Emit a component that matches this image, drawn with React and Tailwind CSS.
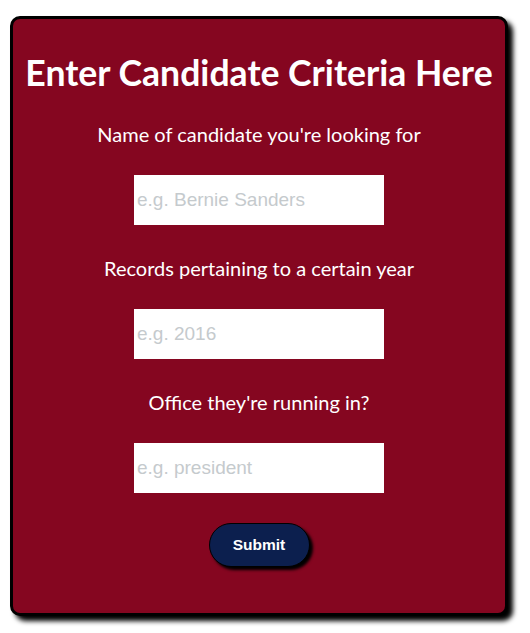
export default function App() {
  const fields = [
    { label: "Name of candidate you're looking for", placeholder: "e.g. Bernie Sanders", mt: "mt-[29px]" },
    { label: "Records pertaining to a certain year", placeholder: "e.g. 2016", mt: "mt-[31px]" },
    { label: "Office they're running in?", placeholder: "e.g. president", mt: "mt-[31px]" },
  ];
  return (
    <div className="min-h-screen bg-white pt-[16px] pl-[10px]">
      <div className="w-[498px] h-[600px] rounded-[10px] border-[3px] border-black bg-[#850620] shadow-[5px_5px_5px_black] flex flex-col items-center pt-[34px] font-['Lato',sans-serif] text-white">
        <h1 className="text-[35.6px] leading-[40px] font-bold">Enter Candidate Criteria Here</h1>
        {fields.map((f) => (
          <div key={f.label} className={`flex flex-col items-center ${f.mt}`}>
            <label className="text-[20px] leading-[24px]">{f.label}</label>
            <input
              placeholder={f.placeholder}
              className="mt-[29px] w-[250px] h-[50px] bg-white px-[3px] text-[19px] text-black font-['Liberation_Sans',Arial,sans-serif] placeholder:text-[#c5cacd] outline-none"
            />
          </div>
        ))}
        <button className="mt-[30px] w-[101px] h-[44px] rounded-full border border-black bg-[#0c1f4e] shadow-[3px_3px_3px_black] text-[15.5px] font-bold font-['Liberation_Sans',Arial,sans-serif] text-white">
          Submit
        </button>
      </div>
    </div>
  );
}
